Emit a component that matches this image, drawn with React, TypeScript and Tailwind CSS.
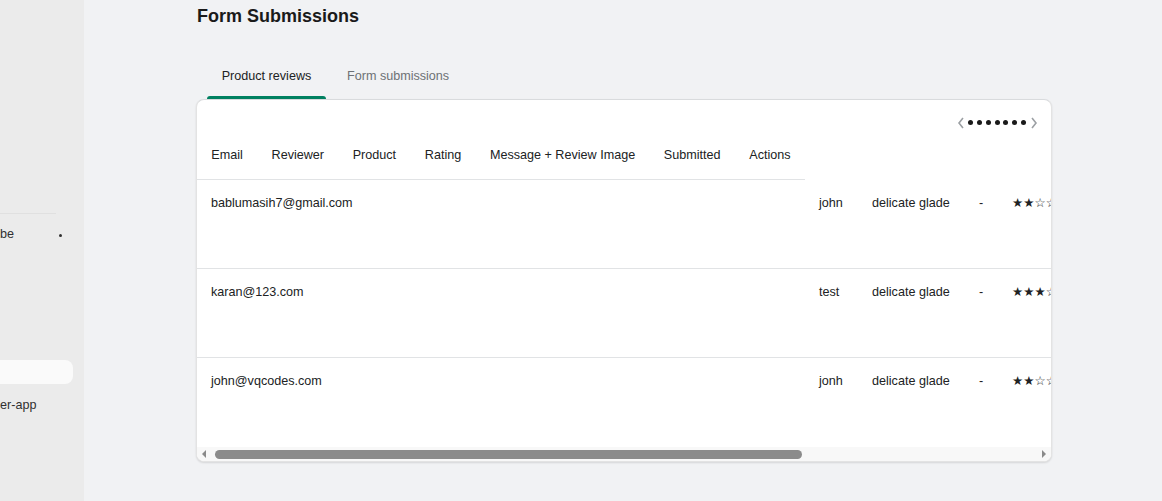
import React from 'react';

type Row = { email: string; name: string; product: string; message: string; stars: number };

const rows: Row[] = [
  { email: 'bablumasih7@gmail.com', name: 'john', product: 'delicate glade', message: '-', stars: 2 },
  { email: 'karan@123.com', name: 'test', product: 'delicate glade', message: '-', stars: 3 },
  { email: 'john@vqcodes.com', name: 'jonh', product: 'delicate glade', message: '-', stars: 2 },
];

const headers = ['Email', 'Reviewer', 'Product', 'Rating', 'Message + Review Image', 'Submitted', 'Actions'];

const Stars: React.FC<{ n: number }> = ({ n }) => (
  <span className="whitespace-nowrap" style={{ fontFamily: '"DejaVu Sans", sans-serif', fontSize: '12.5px' }}>
    {'★'.repeat(n)}
    {'☆'.repeat(5 - n)}
  </span>
);

const Pager: React.FC = () => (
  <div className="flex h-[45px] items-center justify-end pr-[12px]">
    <svg width="10" height="14" viewBox="0 0 10 14" className="mr-[2px]">
      <path d="M7 2 L3 7 L7 12" fill="none" stroke="#9ca0a4" strokeWidth="1.6" />
    </svg>
    <div className="flex gap-[3.8px]">
      {Array.from({ length: 7 }).map((_, i) => (
        <span key={i} className="block h-[5px] w-[5px] rounded-full bg-[#1a1a1a]" />
      ))}
    </div>
    <svg width="10" height="14" viewBox="0 0 10 14" className="ml-[3px]">
      <path d="M3 2 L7 7 L3 12" fill="none" stroke="#9ca0a4" strokeWidth="1.6" />
    </svg>
  </div>
);

const ScrollBar: React.FC = () => (
  <div className="flex h-[14px] items-center bg-[#f8f8f8] px-[3px]">
    <svg width="8" height="10" viewBox="0 0 8 10">
      <path d="M6 1 L2 5 L6 9 Z" fill="#8a8a8a" />
    </svg>
    <div className="ml-[7px] h-[9px] w-[587px] rounded-full bg-[#8b8b8b]" />
    <div className="flex-1" />
    <svg width="8" height="10" viewBox="0 0 8 10">
      <path d="M2 1 L6 5 L2 9 Z" fill="#8a8a8a" />
    </svg>
  </div>
);

export default function App() {
  return (
    <div
      className="flex h-[501px] w-[1162px] overflow-hidden bg-[#f1f2f4] text-[12.6px] text-[#202223]"
      style={{ fontFamily: '"Liberation Sans", Arial, sans-serif' }}
    >
      {/* sidebar (clipped) */}
      <aside className="w-[84px] shrink-0 bg-[#ebebeb] text-[#303030]">
        <div className="mt-[213px] h-px w-[56px] bg-[#e0e0e0]" />
        <div className="mt-[10px] flex h-[20px] items-center">
          <span>be</span>
          <span className="ml-[45px] mt-[2px] block h-[3px] w-[3px] rounded-full bg-[#303030]" />
        </div>
        <div className="mt-[116px] h-[24px] w-[73px] rounded-r-lg bg-[#fafafa]" />
        <div className="mt-[11px] leading-[20px]">er-app</div>
      </aside>

      <main className="flex-1 pl-[113px]">
        <h1 className="pt-[5px] text-[18px] font-bold leading-[22px] text-[#1a1a1a]">Form Submissions</h1>

        <div className="mt-[38px] flex pl-[10px]">
          <div className="flex h-[34px] w-[119px] flex-col justify-between">
            <span className="pt-[3px] text-center leading-[16px] text-[#202223]">Product reviews</span>
            <span className="block h-[3px] w-full rounded-t-sm bg-[#008060]" />
          </div>
          <div className="ml-[6px] flex h-[34px] px-[15px] pt-[3px] leading-[16px] text-[#6d7175]">Form submissions</div>
        </div>

        <div className="-ml-px w-[856px] overflow-hidden rounded-lg border border-[#e3e3e3] border-t-[#d9dbdd] bg-white shadow-[0_1px_2px_rgba(0,0,0,0.12)]">
          <Pager />
          <div className="overflow-hidden">
            <div className="w-[1212px]">
              <div className="flex w-[608px] border-b border-[#e1e3e5]">
                {headers.map((h) => (
                  <div key={h} className="whitespace-nowrap px-[14.35px] pb-[14px] leading-[20px]">
                    {h}
                  </div>
                ))}
              </div>
              {rows.map((r, i) => (
                <div
                  key={r.email}
                  className={`flex h-[89px] items-start pt-[13px] leading-[20px] ${i < rows.length - 1 ? 'border-b border-[#e1e3e5]' : ''}`}
                >
                  <div className="w-[608px] shrink-0 px-[14px]">{r.email}</div>
                  <div className="w-[53px] shrink-0 px-[14px]">{r.name}</div>
                  <div className="w-[107px] shrink-0 whitespace-nowrap px-[14px]">{r.product}</div>
                  <div className="w-[33px] shrink-0 px-[14px]">{r.message}</div>
                  <div className="shrink-0 px-[14px]">
                    <Stars n={r.stars} />
                  </div>
                </div>
              ))}
            </div>
          </div>
          <ScrollBar />
        </div>
      </main>
    </div>
  );
}
